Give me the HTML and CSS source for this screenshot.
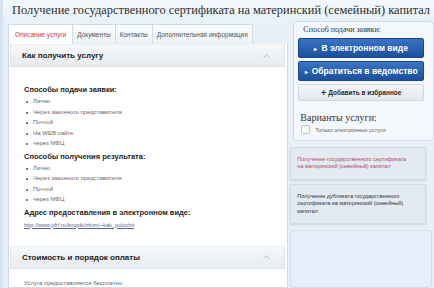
FILE: index.html
```html
<!DOCTYPE html>
<html lang="ru">
<head>
    <meta charset="UTF-8">
    <title>Получение государственного сертификата на материнский (семейный) капитал</title>
    <link rel="stylesheet" href="styles.css">
</head>
<body>

    <h1 class="page-title">Получение государственного сертификата на материнский (семейный) капитал</h1>

    <div class="layout">
        <div class="main">
            <ul class="tabs">
                <li class="active">Описание услуги</li>
                <li>Документы</li>
                <li>Контакты</li>
                <li>Дополнительная информация</li>
            </ul>

            <div class="panel">
                <div class="section-head">
                    <span>Как получить услугу</span>
                    <svg class="chevron" width="7" height="4" viewBox="0 0 7 4"><polyline points="0.5,3.5 3.5,0.8 6.5,3.5" fill="none" stroke="#b3bac3" stroke-width="1"/></svg>
                </div>
                <div class="section-body first">
                    <h4>Способы подачи заявки:</h4>
                    <ul>
                        <li>Лично</li>
                        <li>Через законного представителя</li>
                        <li>Почтой</li>
                        <li>На WEB сайте</li>
                        <li>через МФЦ</li>
                    </ul>
                    <h4>Способы получения результата:</h4>
                    <ul>
                        <li>Лично</li>
                        <li>Через законного представителя</li>
                        <li>Почтой</li>
                        <li>через МФЦ</li>
                    </ul>
                    <h4>Адрес предоставления в электронном виде:</h4>
                    <p class="link"><a href="#">http://www.pfrf.ru/knopki/zhizn/~kak_poluchit</a></p>
                </div>

                <div class="section-head">
                    <span>Стоимость и порядок оплаты</span>
                    <svg class="chevron" width="7" height="4" viewBox="0 0 7 4"><polyline points="0.5,3.5 3.5,0.8 6.5,3.5" fill="none" stroke="#b3bac3" stroke-width="1"/></svg>
                </div>
                <div class="section-body">
                    <p class="plain">Услуга предоставляется бесплатно</p>
                </div>
            </div>
        </div>

        <div class="side">
            <div class="side-box">
                <div class="side-label">Способ подачи заявки:</div>
                <a href="#" class="btn btn-blue"><span class="arrow">&#9656;</span>В электронном виде</a>
                <a href="#" class="btn btn-blue"><span class="arrow">&#9656;</span>Обратиться в ведомство</a>
                <a href="#" class="btn btn-grey"><span class="plus">+</span>Добавить в избранное</a>

                <div class="variants">Варианты услуги:</div>
                <label class="check"><span class="box"></span>Только электронные услуги</label>
            </div>

            <div class="variant current">Получение государственного сертификата на материнский (семейный) капитал</div>
            <div class="variant">Получение дубликата государственного сертификата на материнский (семейный) капитал</div>
            <div class="variant empty"></div>
        </div>
    </div>

</body>
</html>
```

FILE: styles.css
```css
html {
    height: 288px;
    overflow: hidden;
}

body {
    margin: 0;
    padding: 0;
    background-color: #e8f1fa;
    border-left: 3px solid #d6e4f1;
    font-family: 'Liberation Sans', Arial, sans-serif;
    color: #333333;
    height: 288px;
    overflow: hidden;
    box-sizing: border-box;
}

.page-title {
    font-family: 'Liberation Serif', 'Times New Roman', serif;
    font-weight: normal;
    font-size: 12.4px;
    line-height: 20px;
    margin: 0;
    padding: 0 0 0 9px;
    color: #2e2e2e;
    white-space: nowrap;
    background: linear-gradient(#f4f8fc, #e8f1fa);
}

.layout {
    display: flex;
    align-items: flex-start;
    margin-top: 1px;
}

.main {
    width: 281px;
    margin-left: 5px;
    margin-top: 3px;
}

/* tabs */

.tabs {
    display: flex;
    list-style: none;
    margin: 0;
    padding: 0;
    height: 20px;
}

.tabs li {
    font-size: 6.5px;
    line-height: 19px;
    padding: 0 4px;
    color: #555555;
    background: linear-gradient(#fbfcfd, #eef2f5);
    border: 1px solid #d3dae1;
    border-bottom: none;
    margin-right: -1px;
}

.tabs li.active {
    color: #c23b4b;
    background: #ffffff;
    padding: 0 6px;
}

/* main panel */

.panel {
    background: #ffffff;
    border: 1px solid #d3dae1;
    border-top: none;
    padding: 0 2px 0 1px;
    height: 243px;
    overflow: hidden;
}

.section-head {
    display: flex;
    align-items: center;
    justify-content: space-between;
    height: 23px;
    padding: 0 14px 0 11px;
    background: linear-gradient(#f6f8fa, #e7ebef);
    border: 1px solid #e0e5ea;
    border-top-color: #eef1f4;
    box-sizing: border-box;
    font-size: 8px;
    font-weight: bold;
    color: #222222;
}

.section-body {
    padding: 9px 14px 0 14px;
}

.section-body.first {
    padding-top: 15px;
    padding-bottom: 16px;
}

.section-body h4 {
    font-size: 7.5px;
    line-height: 10px;
    margin: 3px 0 1px;
    color: #1e1e1e;
}

.section-body ul {
    list-style: none;
    margin: 0;
    padding: 0;
}

.section-body li {
    position: relative;
    font-size: 6px;
    line-height: 10.5px;
    padding-left: 9px;
    color: #6a6a6a;
}

.section-body li::before {
    content: "";
    position: absolute;
    left: 2px;
    top: 5px;
    width: 2px;
    height: 2px;
    background: #777777;
}

.section-body p {
    margin: 0;
    font-size: 6px;
    line-height: 10px;
}

.section-body .link {
    margin-top: 2px;
}

.section-body .link a {
    color: #5666a0;
    font-size: 5.6px;
}

.section-body .plain {
    color: #666666;
}

/* right column */

.side {
    width: 144px;
    margin-left: 2px;
}

.side-box {
    margin-left: 3px;
    background: #f4f8fc;
    border: 1px solid #d2dde9;
    border-radius: 3px;
    padding: 2px 9px 6px 4px;
}

.side-label {
    font-family: 'Liberation Serif', 'Times New Roman', serif;
    font-size: 8px;
    line-height: 12px;
    padding-left: 5px;
    margin-bottom: 2px;
    color: #333333;
}

.btn {
    display: flex;
    align-items: center;
    justify-content: center;
    text-decoration: none;
    border-radius: 2px;
    box-sizing: border-box;
    font-weight: bold;
    margin-bottom: 3px;
}

.btn-blue {
    height: 20px;
    background: linear-gradient(#3a74c6, #1c4f9e);
    border: 1px solid #174785;
    color: #ffffff;
    font-size: 8.5px;
}

.btn-blue .arrow {
    font-size: 6px;
    margin-right: 4px;
}

.btn-grey {
    height: 17px;
    background: linear-gradient(#f4f6f8, #e3e8ed);
    border: 1px solid #cfd6de;
    color: #2a2a2a;
    font-size: 6.5px;
}

.btn-grey .plus {
    font-size: 9px;
    margin-right: 2px;
}

.variants {
    font-family: 'Liberation Serif', 'Times New Roman', serif;
    font-size: 10px;
    line-height: 14px;
    margin-top: 10px;
    padding-left: 2px;
    color: #333333;
}

.check {
    display: flex;
    align-items: center;
    font-size: 5.5px;
    color: #666666;
    padding-left: 3px;
}

.check .box {
    width: 7px;
    height: 7px;
    border: 1px solid #b9c2cc;
    border-radius: 2px;
    background: #ffffff;
    margin-right: 5px;
}

.variant {
    margin-top: 6px;
    margin-right: 8px;
    padding: 7.8px 12px 7.8px 6px;
    background: #e3eaf2;
    border: 1px solid #d3dce6;
    box-shadow: 0 1px 2px rgba(0, 0, 0, 0.12);
    font-size: 5.5px;
    line-height: 7.6px;
    color: #333333;
}

.variant + .variant {
    margin-top: 4px;
}

.variant.current {
    color: #b24a66;
}

.variant.empty {
    margin-top: 6px;
    margin-right: 2px;
    padding: 0;
    height: 56px;
    background: #e5eff9;
    border-color: #d0dcea;
    border-radius: 3px;
    box-shadow: none;
}
```
